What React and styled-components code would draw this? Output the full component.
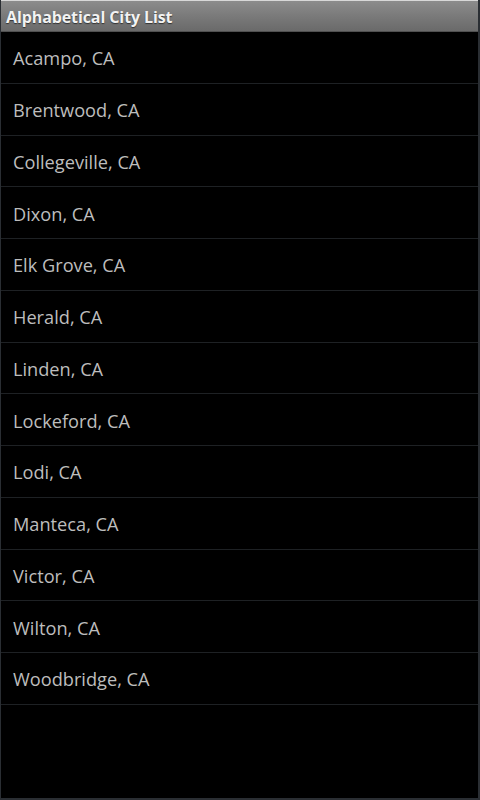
import React from 'react'
import styled, { createGlobalStyle } from 'styled-components'

const GlobalStyle = createGlobalStyle`
  html, body {
    margin: 0;
    padding: 0;
    background: #000;
  }
  body {
    font-family: "Open Sans", "Noto Sans", "DejaVu Sans", sans-serif;
  }
`

const Screen = styled.div`
  width: 480px;
  height: 800px;
  box-sizing: border-box;
  display: flex;
  flex-direction: column;
  background: #000;
  border-left: 1px solid #2a2e33;
  border-right: 2px solid #2a2e33;
  border-bottom: 2px solid #2a2e33;
  overflow: hidden;
`

const TitleBar = styled.div`
  height: 32px;
  flex-shrink: 0;
  box-sizing: border-box;
  display: flex;
  align-items: center;
  padding: 1px 5px 0;
  border-top: 1px solid #d8d8d8;
  background: linear-gradient(to bottom, #8c8c8c 0%, #7a7a7a 50%, #6a6a6a 100%);
  border-bottom: 1px solid #505050;
`

const Title = styled.h1`
  margin: 0;
  font-size: 16px;
  font-weight: 700;
  color: #f2f2f2;
  text-shadow: 0 1px 1px #333;
  letter-spacing: -0.1px;
`

const List = styled.ul`
  list-style: none;
  margin: 0;
  padding: 0;
`

const Row = styled.li`
  height: 50.75px;
  box-sizing: border-box;
  display: flex;
  align-items: center;
  padding: 2px 12px 0;
  border-bottom: 1px solid #1e2124;
  font-size: 18.2px;
  color: #bdbdbd;
  height: 51.75px;
`

const cities = [
  'Acampo, CA',
  'Brentwood, CA',
  'Collegeville, CA',
  'Dixon, CA',
  'Elk Grove, CA',
  'Herald, CA',
  'Linden, CA',
  'Lockeford, CA',
  'Lodi, CA',
  'Manteca, CA',
  'Victor, CA',
  'Wilton, CA',
  'Woodbridge, CA',
]

const App = () => {
  return (
    <>
      <GlobalStyle />
      <Screen>
        <TitleBar>
          <Title>Alphabetical City List</Title>
        </TitleBar>
        <List>
          {cities.map((c) => (
            <Row key={c}>{c}</Row>
          ))}
        </List>
      </Screen>
    </>
  )
}

export default App
